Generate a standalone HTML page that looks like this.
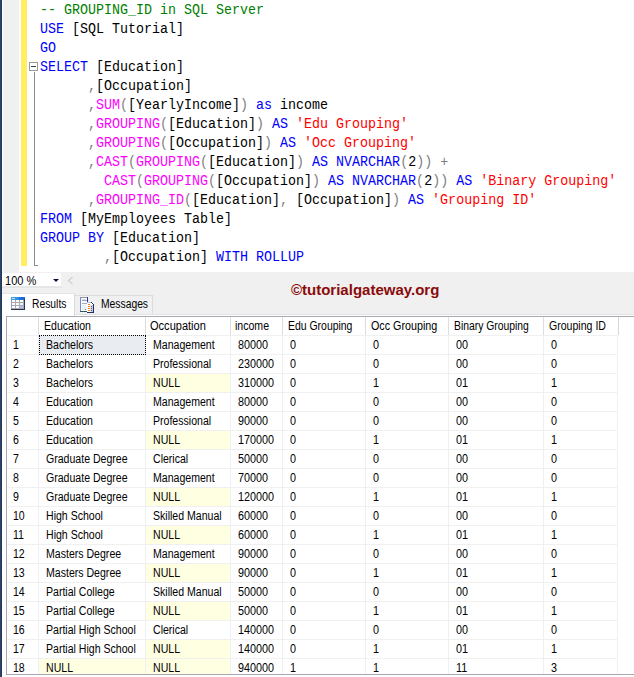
<!DOCTYPE html>
<html><head><meta charset="utf-8"><title>GROUPING_ID in SQL Server</title>
<style>
html,body{margin:0;padding:0;background:#fff;}
body{width:634px;height:677px;position:relative;overflow:hidden;font-family:"Liberation Sans",sans-serif;}
div{position:absolute;box-sizing:border-box;}
#strip{left:0;top:0;width:2px;height:677px;background:#23385c;border-left:1px solid #2f4264;}
#margin{left:3px;top:0;width:16px;height:272px;background:#f0f0f0;}
#yellow{left:21.25px;top:0;width:5.5px;height:266px;background:#ffee62;}
#editor{left:0;top:0;width:634px;height:272px;background:#fff;}
.cl{left:40px;height:19px;line-height:19px;white-space:pre;font-family:"Liberation Mono",monospace;font-size:14px;transform:scaleX(0.9524);transform-origin:0 0;}
.g{color:#008000}.b{color:#0000ff}.k{color:#000}.m{color:#ff00ff}.r{color:#ff0000}.y{color:#808080}
#obox{left:29px;top:62px;width:9px;height:9px;border:1px solid #9a9a9a;background:#fff;}
#obox i{position:absolute;left:1px;top:3px;width:5px;height:1px;background:#2b4a48;}
#oline{left:34px;top:72px;width:1px;height:194px;background:#8c8c8c;}
#otick{left:34px;top:265px;width:4px;height:1px;background:#8c8c8c;}
#lower{left:2px;top:272px;width:632px;height:43px;background:#f0f0f0;border-bottom:1px solid #e2e2e2;}
#page{left:2px;top:315px;width:632px;height:362px;background:#fff;}
#zoom{left:2px;top:272.5px;width:59.2px;height:13.7px;background:#fff;}
#zoomsh{left:2px;top:286.2px;width:59.8px;height:2.3px;background:#e6e6e6;}
#zoomt{left:5px;top:274px;height:15px;line-height:15px;font-size:12px;color:#000;white-space:pre;transform:scaleX(0.92);transform-origin:0 0;}
#zarrow{left:53px;top:279px;width:0;height:0;border-left:3px solid transparent;border-right:3px solid transparent;border-top:3px solid #10103c;}
#wm{left:291px;top:281px;height:18px;line-height:18px;font-size:15px;font-weight:bold;color:#8b0a0a;white-space:pre;}
#tabR{left:2px;top:293px;width:73px;height:23px;background:#fff;border-right:1px solid #dadada;border-top:1px solid #e4e4e4;}
#tabM{left:75px;top:295px;width:78px;height:19px;background:#f0f0f0;border-top:1px solid #dcdcdc;border-right:1px solid #dcdcdc;}
.tt{top:297px;height:14px;line-height:14px;font-size:12px;color:#000;white-space:pre;transform:scaleX(0.86);transform-origin:0 0;}
#grid{left:6px;top:316px;width:628px;height:359px;background:#fff;border-left:1px solid #a8a8b0;border-top:1px solid #a8a8b0;border-bottom:1px solid #a8a8b0;}
.hc,.rh,.gc{height:18px;line-height:18px;font-size:12px;color:#000;white-space:pre;overflow:hidden;}
.hc span,.rh span,.gc span{display:inline-block;transform:scaleX(0.88);transform-origin:0 50%;}
.hc{padding-left:5px;}
.rh{padding-left:6px;}
.gc{padding-left:7px;}
.nu{background:#ffffe1;}
.sel{background:#e9edf1;}
#selb{left:39px;top:335px;width:107px;height:20px;border:1px dotted #000;}
#gbot{left:7px;top:674px;width:627px;height:3px;background:#fff;border-top:1px solid #a8a8b0;}
.vl{width:1px;background:#efeff1;}
.hl{height:1px;background:#f0f0f0;}
</style></head><body>
<div id="editor"></div>
<div id="margin"></div>
<div id="yellow"></div>
<div id="obox"><i></i></div><div id="oline"></div><div id="otick"></div>
<div class="cl" style="top:1px"><span class="g">-- GROUPING_ID in SQL Server</span></div>
<div class="cl" style="top:20px"><span class="b">USE</span><span class="k"> [SQL Tutorial]</span></div>
<div class="cl" style="top:39px"><span class="b">GO</span></div>
<div class="cl" style="top:58px"><span class="b">SELECT</span><span class="k"> [Education]</span></div>
<div class="cl" style="top:77px"><span class="k">      </span><span class="y">,</span><span class="k">[Occupation]</span></div>
<div class="cl" style="top:96px"><span class="k">      </span><span class="y">,</span><span class="m">SUM</span><span class="y">(</span><span class="k">[YearlyIncome]</span><span class="y">)</span><span class="b"> as</span><span class="k"> income</span></div>
<div class="cl" style="top:115px"><span class="k">      </span><span class="y">,</span><span class="m">GROUPING</span><span class="y">(</span><span class="k">[Education]</span><span class="y">)</span><span class="b"> AS </span><span class="r">'Edu Grouping'</span></div>
<div class="cl" style="top:134px"><span class="k">      </span><span class="y">,</span><span class="m">GROUPING</span><span class="y">(</span><span class="k">[Occupation]</span><span class="y">)</span><span class="b"> AS </span><span class="r">'Occ Grouping'</span></div>
<div class="cl" style="top:153px"><span class="k">      </span><span class="y">,</span><span class="m">CAST</span><span class="y">(</span><span class="m">GROUPING</span><span class="y">(</span><span class="k">[Education]</span><span class="y">)</span><span class="b"> AS NVARCHAR</span><span class="y">(</span><span class="k">2</span><span class="y">))</span><span class="y"> +</span></div>
<div class="cl" style="top:172px"><span class="k">        </span><span class="m">CAST</span><span class="y">(</span><span class="m">GROUPING</span><span class="y">(</span><span class="k">[Occupation]</span><span class="y">)</span><span class="b"> AS NVARCHAR</span><span class="y">(</span><span class="k">2</span><span class="y">))</span><span class="b"> AS </span><span class="r">'Binary Grouping'</span></div>
<div class="cl" style="top:191px"><span class="k">      </span><span class="y">,</span><span class="m">GROUPING_ID</span><span class="y">(</span><span class="k">[Education]</span><span class="y">,</span><span class="k"> [Occupation]</span><span class="y">)</span><span class="b"> AS </span><span class="r">'Grouping ID'</span></div>
<div class="cl" style="top:210px"><span class="b">FROM</span><span class="k"> [MyEmployees Table]</span></div>
<div class="cl" style="top:229px"><span class="b">GROUP BY</span><span class="k"> [Education]</span></div>
<div class="cl" style="top:248px"><span class="k">        </span><span class="y">,</span><span class="k">[Occupation]</span><span class="b"> WITH ROLLUP</span></div>

<div id="lower"></div><div id="page"></div>
<div id="zoom"></div><div id="zoomsh"></div><div id="zoomt">100 %</div><div id="zarrow"></div>
<svg style="position:absolute;left:66px;top:275px" width="8" height="12" viewBox="0 0 8 12"><path d="M6.5 2.2 L2.3 5.6 L6.5 9" fill="none" stroke="#c8cbcf" stroke-width="1.1"/></svg>
<div id="wm">©tutorialgateway.org</div>
<div id="tabR"></div><div id="tabM"></div>
<svg style="position:absolute;left:11px;top:297px" width="14" height="13" viewBox="0 0 14 13" shape-rendering="crispEdges">
<defs><linearGradient id="hb" x1="0" y1="0" x2="1" y2="0"><stop offset="0" stop-color="#49a6e0"/><stop offset="0.55" stop-color="#2f8ce0"/><stop offset="0.6" stop-color="#1d73dc"/><stop offset="1" stop-color="#1668d4"/></linearGradient></defs>
<rect x="0" y="0" width="14" height="13" fill="#a9a9b4"/>
<rect x="0" y="0" width="14" height="3" fill="url(#hb)"/>
<rect x="1" y="1" width="3" height="1" fill="#b9dcf4"/>
<rect x="13" y="2" width="1" height="11" fill="#2a3550"/>
<rect x="0" y="12" width="14" height="1" fill="#26384a"/>
<rect x="0" y="3" width="1" height="9" fill="#9c9ccc"/>
<g fill="#fff"><rect x="1" y="3" width="3" height="2"/><rect x="5" y="3" width="3" height="2"/><rect x="9" y="3" width="3" height="2"/>
<rect x="1" y="6" width="3" height="2"/><rect x="5" y="6" width="3" height="2"/><rect x="1" y="9" width="3" height="2"/><rect x="5" y="9" width="3" height="2"/></g>
<rect x="9" y="6" width="3" height="2" fill="#e4f6fa"/><rect x="9" y="9" width="3" height="2" fill="#b4bcf4"/>
</svg>
<svg style="position:absolute;left:80px;top:297px" width="15" height="16" viewBox="0 0 15 16" shape-rendering="crispEdges">
<rect x="0" y="0" width="8" height="15" fill="#f6fbfd"/>
<rect x="0" y="0" width="8" height="1" fill="#9a9aa4"/>
<rect x="0" y="0" width="1" height="15" fill="#8484d4"/>
<rect x="7" y="0" width="1" height="6" fill="#34349c"/>
<rect x="0" y="14" width="8" height="1" fill="#2c5c50"/>
<rect x="2" y="3" width="5" height="1" fill="#9ca4b4"/>
<rect x="2" y="2" width="4" height="1" fill="#cfe6ee"/>
<rect x="2" y="6" width="5" height="1" fill="#a4acb8"/>
<rect x="2" y="8" width="4" height="5" fill="#e2f4f6"/>
<rect x="5" y="12" width="1" height="1" fill="#8c7424"/>
<path d="M7 5 H11 L14 8 V16 H7 Z" fill="#fff"/>
<path d="M11 5 L14 8 V16 H7 V15 H13 V8 L10.5 5.5 Z" fill="#1f2f6c"/>
<rect x="7" y="5" width="4" height="1" fill="#a8c8e8"/>
<rect x="11" y="6" width="1" height="2" fill="#fff"/><rect x="11" y="8" width="2" height="7" fill="#c6c6ee"/><rect x="10" y="8" width="1" height="7" fill="#e6e6f8"/>
<g fill="#f4801c"><rect x="8" y="7" width="2" height="1"/><rect x="8" y="9" width="2" height="1"/><rect x="8" y="11" width="2" height="1"/><rect x="8" y="13" width="2" height="1"/></g>
<g fill="#6c6c24"><rect x="11" y="9" width="1" height="1"/><rect x="11" y="11" width="1" height="1"/></g><rect x="11" y="13" width="1" height="1" fill="#2c6c4c"/>
</svg>
<div class="tt" style="left:32px">Results</div>
<div class="tt" style="left:101px">Messages</div>
<div id="grid"></div>
<div class="vl" style="left:38px;top:317px;height:18px;background:#dedee0"></div>
<div class="vl" style="left:38px;top:335px;height:339px"></div>
<div class="vl" style="left:145px;top:317px;height:18px;background:#dedee0"></div>
<div class="vl" style="left:145px;top:335px;height:339px"></div>
<div class="vl" style="left:230px;top:317px;height:18px;background:#dedee0"></div>
<div class="vl" style="left:230px;top:335px;height:339px"></div>
<div class="vl" style="left:282px;top:317px;height:18px;background:#dedee0"></div>
<div class="vl" style="left:282px;top:335px;height:339px"></div>
<div class="vl" style="left:365px;top:317px;height:18px;background:#dedee0"></div>
<div class="vl" style="left:365px;top:335px;height:339px"></div>
<div class="vl" style="left:448px;top:317px;height:18px;background:#dedee0"></div>
<div class="vl" style="left:448px;top:335px;height:339px"></div>
<div class="vl" style="left:543px;top:317px;height:18px;background:#dedee0"></div>
<div class="vl" style="left:543px;top:335px;height:339px"></div>
<div class="vl" style="left:618px;top:317px;height:18px;background:#d6d6d6"></div>
<div class="vl" style="left:617px;top:335px;height:339px"></div>
<div class="hl" style="left:7px;top:335px;width:611px"></div>
<div class="hl" style="left:7px;top:354px;width:611px"></div>
<div class="hl" style="left:7px;top:373px;width:611px"></div>
<div class="hl" style="left:7px;top:392px;width:611px"></div>
<div class="hl" style="left:7px;top:411px;width:611px"></div>
<div class="hl" style="left:7px;top:430px;width:611px"></div>
<div class="hl" style="left:7px;top:449px;width:611px"></div>
<div class="hl" style="left:7px;top:468px;width:611px"></div>
<div class="hl" style="left:7px;top:487px;width:611px"></div>
<div class="hl" style="left:7px;top:506px;width:611px"></div>
<div class="hl" style="left:7px;top:525px;width:611px"></div>
<div class="hl" style="left:7px;top:544px;width:611px"></div>
<div class="hl" style="left:7px;top:563px;width:611px"></div>
<div class="hl" style="left:7px;top:582px;width:611px"></div>
<div class="hl" style="left:7px;top:601px;width:611px"></div>
<div class="hl" style="left:7px;top:620px;width:611px"></div>
<div class="hl" style="left:7px;top:639px;width:611px"></div>
<div class="hl" style="left:7px;top:658px;width:611px"></div>

<div class="hc" style="left:7px;top:317px;width:31px;height:18px;padding-left:5px"><span style="transform:scaleX(0.88)"></span></div>
<div class="hc" style="left:39px;top:317px;width:106px;height:18px;padding-left:5px"><span style="transform:scaleX(0.88)">Education</span></div>
<div class="hc" style="left:146px;top:317px;width:84px;height:18px;padding-left:4px"><span style="transform:scaleX(0.92)">Occupation</span></div>
<div class="hc" style="left:231px;top:317px;width:51px;height:18px;padding-left:4px"><span style="transform:scaleX(0.88)">income</span></div>
<div class="hc" style="left:283px;top:317px;width:82px;height:18px;padding-left:5px"><span style="transform:scaleX(0.87)">Edu Grouping</span></div>
<div class="hc" style="left:366px;top:317px;width:82px;height:18px;padding-left:4.5px"><span style="transform:scaleX(0.895)">Occ Grouping</span></div>
<div class="hc" style="left:449px;top:317px;width:94px;height:18px;padding-left:5px"><span style="transform:scaleX(0.862)">Binary Grouping</span></div>
<div class="hc" style="left:544px;top:317px;width:74px;height:18px;padding-left:5px"><span style="transform:scaleX(0.88)">Grouping ID</span></div>
<div class="rh" style="left:7px;top:336px;width:31px"><span>1</span></div>
<div class="gc sel" style="left:39px;top:336px;width:106px"><span>Bachelors</span></div>
<div class="gc" style="left:146px;top:336px;width:84px"><span>Management</span></div>
<div class="gc" style="left:231px;top:336px;width:51px"><span style="transform:scaleX(0.9)">80000</span></div>
<div class="gc" style="left:283px;top:336px;width:82px"><span style="transform:scaleX(0.9)">0</span></div>
<div class="gc" style="left:366px;top:336px;width:82px"><span style="transform:scaleX(0.9)">0</span></div>
<div class="gc" style="left:449px;top:336px;width:94px"><span style="transform:scaleX(0.9)">00</span></div>
<div class="gc" style="left:544px;top:336px;width:74px"><span style="transform:scaleX(0.9)">0</span></div>
<div class="rh" style="left:7px;top:355px;width:31px"><span>2</span></div>
<div class="gc" style="left:39px;top:355px;width:106px"><span>Bachelors</span></div>
<div class="gc" style="left:146px;top:355px;width:84px"><span>Professional</span></div>
<div class="gc" style="left:231px;top:355px;width:51px"><span style="transform:scaleX(0.9)">230000</span></div>
<div class="gc" style="left:283px;top:355px;width:82px"><span style="transform:scaleX(0.9)">0</span></div>
<div class="gc" style="left:366px;top:355px;width:82px"><span style="transform:scaleX(0.9)">0</span></div>
<div class="gc" style="left:449px;top:355px;width:94px"><span style="transform:scaleX(0.9)">00</span></div>
<div class="gc" style="left:544px;top:355px;width:74px"><span style="transform:scaleX(0.9)">0</span></div>
<div class="rh" style="left:7px;top:374px;width:31px"><span>3</span></div>
<div class="gc" style="left:39px;top:374px;width:106px"><span>Bachelors</span></div>
<div class="gc nu" style="left:146px;top:374px;width:84px"><span>NULL</span></div>
<div class="gc" style="left:231px;top:374px;width:51px"><span style="transform:scaleX(0.9)">310000</span></div>
<div class="gc" style="left:283px;top:374px;width:82px"><span style="transform:scaleX(0.9)">0</span></div>
<div class="gc" style="left:366px;top:374px;width:82px"><span style="transform:scaleX(0.9)">1</span></div>
<div class="gc" style="left:449px;top:374px;width:94px"><span style="transform:scaleX(0.9)">01</span></div>
<div class="gc" style="left:544px;top:374px;width:74px"><span style="transform:scaleX(0.9)">1</span></div>
<div class="rh" style="left:7px;top:393px;width:31px"><span>4</span></div>
<div class="gc" style="left:39px;top:393px;width:106px"><span>Education</span></div>
<div class="gc" style="left:146px;top:393px;width:84px"><span>Management</span></div>
<div class="gc" style="left:231px;top:393px;width:51px"><span style="transform:scaleX(0.9)">80000</span></div>
<div class="gc" style="left:283px;top:393px;width:82px"><span style="transform:scaleX(0.9)">0</span></div>
<div class="gc" style="left:366px;top:393px;width:82px"><span style="transform:scaleX(0.9)">0</span></div>
<div class="gc" style="left:449px;top:393px;width:94px"><span style="transform:scaleX(0.9)">00</span></div>
<div class="gc" style="left:544px;top:393px;width:74px"><span style="transform:scaleX(0.9)">0</span></div>
<div class="rh" style="left:7px;top:412px;width:31px"><span>5</span></div>
<div class="gc" style="left:39px;top:412px;width:106px"><span>Education</span></div>
<div class="gc" style="left:146px;top:412px;width:84px"><span>Professional</span></div>
<div class="gc" style="left:231px;top:412px;width:51px"><span style="transform:scaleX(0.9)">90000</span></div>
<div class="gc" style="left:283px;top:412px;width:82px"><span style="transform:scaleX(0.9)">0</span></div>
<div class="gc" style="left:366px;top:412px;width:82px"><span style="transform:scaleX(0.9)">0</span></div>
<div class="gc" style="left:449px;top:412px;width:94px"><span style="transform:scaleX(0.9)">00</span></div>
<div class="gc" style="left:544px;top:412px;width:74px"><span style="transform:scaleX(0.9)">0</span></div>
<div class="rh" style="left:7px;top:431px;width:31px"><span>6</span></div>
<div class="gc" style="left:39px;top:431px;width:106px"><span>Education</span></div>
<div class="gc nu" style="left:146px;top:431px;width:84px"><span>NULL</span></div>
<div class="gc" style="left:231px;top:431px;width:51px"><span style="transform:scaleX(0.9)">170000</span></div>
<div class="gc" style="left:283px;top:431px;width:82px"><span style="transform:scaleX(0.9)">0</span></div>
<div class="gc" style="left:366px;top:431px;width:82px"><span style="transform:scaleX(0.9)">1</span></div>
<div class="gc" style="left:449px;top:431px;width:94px"><span style="transform:scaleX(0.9)">01</span></div>
<div class="gc" style="left:544px;top:431px;width:74px"><span style="transform:scaleX(0.9)">1</span></div>
<div class="rh" style="left:7px;top:450px;width:31px"><span>7</span></div>
<div class="gc" style="left:39px;top:450px;width:106px"><span>Graduate Degree</span></div>
<div class="gc" style="left:146px;top:450px;width:84px"><span>Clerical</span></div>
<div class="gc" style="left:231px;top:450px;width:51px"><span style="transform:scaleX(0.9)">50000</span></div>
<div class="gc" style="left:283px;top:450px;width:82px"><span style="transform:scaleX(0.9)">0</span></div>
<div class="gc" style="left:366px;top:450px;width:82px"><span style="transform:scaleX(0.9)">0</span></div>
<div class="gc" style="left:449px;top:450px;width:94px"><span style="transform:scaleX(0.9)">00</span></div>
<div class="gc" style="left:544px;top:450px;width:74px"><span style="transform:scaleX(0.9)">0</span></div>
<div class="rh" style="left:7px;top:469px;width:31px"><span>8</span></div>
<div class="gc" style="left:39px;top:469px;width:106px"><span>Graduate Degree</span></div>
<div class="gc" style="left:146px;top:469px;width:84px"><span>Management</span></div>
<div class="gc" style="left:231px;top:469px;width:51px"><span style="transform:scaleX(0.9)">70000</span></div>
<div class="gc" style="left:283px;top:469px;width:82px"><span style="transform:scaleX(0.9)">0</span></div>
<div class="gc" style="left:366px;top:469px;width:82px"><span style="transform:scaleX(0.9)">0</span></div>
<div class="gc" style="left:449px;top:469px;width:94px"><span style="transform:scaleX(0.9)">00</span></div>
<div class="gc" style="left:544px;top:469px;width:74px"><span style="transform:scaleX(0.9)">0</span></div>
<div class="rh" style="left:7px;top:488px;width:31px"><span>9</span></div>
<div class="gc" style="left:39px;top:488px;width:106px"><span>Graduate Degree</span></div>
<div class="gc nu" style="left:146px;top:488px;width:84px"><span>NULL</span></div>
<div class="gc" style="left:231px;top:488px;width:51px"><span style="transform:scaleX(0.9)">120000</span></div>
<div class="gc" style="left:283px;top:488px;width:82px"><span style="transform:scaleX(0.9)">0</span></div>
<div class="gc" style="left:366px;top:488px;width:82px"><span style="transform:scaleX(0.9)">1</span></div>
<div class="gc" style="left:449px;top:488px;width:94px"><span style="transform:scaleX(0.9)">01</span></div>
<div class="gc" style="left:544px;top:488px;width:74px"><span style="transform:scaleX(0.9)">1</span></div>
<div class="rh" style="left:7px;top:507px;width:31px"><span>10</span></div>
<div class="gc" style="left:39px;top:507px;width:106px"><span>High School</span></div>
<div class="gc" style="left:146px;top:507px;width:84px"><span>Skilled Manual</span></div>
<div class="gc" style="left:231px;top:507px;width:51px"><span style="transform:scaleX(0.9)">60000</span></div>
<div class="gc" style="left:283px;top:507px;width:82px"><span style="transform:scaleX(0.9)">0</span></div>
<div class="gc" style="left:366px;top:507px;width:82px"><span style="transform:scaleX(0.9)">0</span></div>
<div class="gc" style="left:449px;top:507px;width:94px"><span style="transform:scaleX(0.9)">00</span></div>
<div class="gc" style="left:544px;top:507px;width:74px"><span style="transform:scaleX(0.9)">0</span></div>
<div class="rh" style="left:7px;top:526px;width:31px"><span>11</span></div>
<div class="gc" style="left:39px;top:526px;width:106px"><span>High School</span></div>
<div class="gc nu" style="left:146px;top:526px;width:84px"><span>NULL</span></div>
<div class="gc" style="left:231px;top:526px;width:51px"><span style="transform:scaleX(0.9)">60000</span></div>
<div class="gc" style="left:283px;top:526px;width:82px"><span style="transform:scaleX(0.9)">0</span></div>
<div class="gc" style="left:366px;top:526px;width:82px"><span style="transform:scaleX(0.9)">1</span></div>
<div class="gc" style="left:449px;top:526px;width:94px"><span style="transform:scaleX(0.9)">01</span></div>
<div class="gc" style="left:544px;top:526px;width:74px"><span style="transform:scaleX(0.9)">1</span></div>
<div class="rh" style="left:7px;top:545px;width:31px"><span>12</span></div>
<div class="gc" style="left:39px;top:545px;width:106px"><span>Masters Degree</span></div>
<div class="gc" style="left:146px;top:545px;width:84px"><span>Management</span></div>
<div class="gc" style="left:231px;top:545px;width:51px"><span style="transform:scaleX(0.9)">90000</span></div>
<div class="gc" style="left:283px;top:545px;width:82px"><span style="transform:scaleX(0.9)">0</span></div>
<div class="gc" style="left:366px;top:545px;width:82px"><span style="transform:scaleX(0.9)">0</span></div>
<div class="gc" style="left:449px;top:545px;width:94px"><span style="transform:scaleX(0.9)">00</span></div>
<div class="gc" style="left:544px;top:545px;width:74px"><span style="transform:scaleX(0.9)">0</span></div>
<div class="rh" style="left:7px;top:564px;width:31px"><span>13</span></div>
<div class="gc" style="left:39px;top:564px;width:106px"><span>Masters Degree</span></div>
<div class="gc nu" style="left:146px;top:564px;width:84px"><span>NULL</span></div>
<div class="gc" style="left:231px;top:564px;width:51px"><span style="transform:scaleX(0.9)">90000</span></div>
<div class="gc" style="left:283px;top:564px;width:82px"><span style="transform:scaleX(0.9)">0</span></div>
<div class="gc" style="left:366px;top:564px;width:82px"><span style="transform:scaleX(0.9)">1</span></div>
<div class="gc" style="left:449px;top:564px;width:94px"><span style="transform:scaleX(0.9)">01</span></div>
<div class="gc" style="left:544px;top:564px;width:74px"><span style="transform:scaleX(0.9)">1</span></div>
<div class="rh" style="left:7px;top:583px;width:31px"><span>14</span></div>
<div class="gc" style="left:39px;top:583px;width:106px"><span>Partial College</span></div>
<div class="gc" style="left:146px;top:583px;width:84px"><span>Skilled Manual</span></div>
<div class="gc" style="left:231px;top:583px;width:51px"><span style="transform:scaleX(0.9)">50000</span></div>
<div class="gc" style="left:283px;top:583px;width:82px"><span style="transform:scaleX(0.9)">0</span></div>
<div class="gc" style="left:366px;top:583px;width:82px"><span style="transform:scaleX(0.9)">0</span></div>
<div class="gc" style="left:449px;top:583px;width:94px"><span style="transform:scaleX(0.9)">00</span></div>
<div class="gc" style="left:544px;top:583px;width:74px"><span style="transform:scaleX(0.9)">0</span></div>
<div class="rh" style="left:7px;top:602px;width:31px"><span>15</span></div>
<div class="gc" style="left:39px;top:602px;width:106px"><span>Partial College</span></div>
<div class="gc nu" style="left:146px;top:602px;width:84px"><span>NULL</span></div>
<div class="gc" style="left:231px;top:602px;width:51px"><span style="transform:scaleX(0.9)">50000</span></div>
<div class="gc" style="left:283px;top:602px;width:82px"><span style="transform:scaleX(0.9)">0</span></div>
<div class="gc" style="left:366px;top:602px;width:82px"><span style="transform:scaleX(0.9)">1</span></div>
<div class="gc" style="left:449px;top:602px;width:94px"><span style="transform:scaleX(0.9)">01</span></div>
<div class="gc" style="left:544px;top:602px;width:74px"><span style="transform:scaleX(0.9)">1</span></div>
<div class="rh" style="left:7px;top:621px;width:31px"><span>16</span></div>
<div class="gc" style="left:39px;top:621px;width:106px"><span>Partial High School</span></div>
<div class="gc" style="left:146px;top:621px;width:84px"><span>Clerical</span></div>
<div class="gc" style="left:231px;top:621px;width:51px"><span style="transform:scaleX(0.9)">140000</span></div>
<div class="gc" style="left:283px;top:621px;width:82px"><span style="transform:scaleX(0.9)">0</span></div>
<div class="gc" style="left:366px;top:621px;width:82px"><span style="transform:scaleX(0.9)">0</span></div>
<div class="gc" style="left:449px;top:621px;width:94px"><span style="transform:scaleX(0.9)">00</span></div>
<div class="gc" style="left:544px;top:621px;width:74px"><span style="transform:scaleX(0.9)">0</span></div>
<div class="rh" style="left:7px;top:640px;width:31px"><span>17</span></div>
<div class="gc" style="left:39px;top:640px;width:106px"><span>Partial High School</span></div>
<div class="gc nu" style="left:146px;top:640px;width:84px"><span>NULL</span></div>
<div class="gc" style="left:231px;top:640px;width:51px"><span style="transform:scaleX(0.9)">140000</span></div>
<div class="gc" style="left:283px;top:640px;width:82px"><span style="transform:scaleX(0.9)">0</span></div>
<div class="gc" style="left:366px;top:640px;width:82px"><span style="transform:scaleX(0.9)">1</span></div>
<div class="gc" style="left:449px;top:640px;width:94px"><span style="transform:scaleX(0.9)">01</span></div>
<div class="gc" style="left:544px;top:640px;width:74px"><span style="transform:scaleX(0.9)">1</span></div>
<div class="rh" style="left:7px;top:659px;width:31px"><span>18</span></div>
<div class="gc nu" style="left:39px;top:659px;width:106px"><span>NULL</span></div>
<div class="gc nu" style="left:146px;top:659px;width:84px"><span>NULL</span></div>
<div class="gc" style="left:231px;top:659px;width:51px"><span style="transform:scaleX(0.9)">940000</span></div>
<div class="gc" style="left:283px;top:659px;width:82px"><span style="transform:scaleX(0.9)">1</span></div>
<div class="gc" style="left:366px;top:659px;width:82px"><span style="transform:scaleX(0.9)">1</span></div>
<div class="gc" style="left:449px;top:659px;width:94px"><span style="transform:scaleX(0.9)">11</span></div>
<div class="gc" style="left:544px;top:659px;width:74px"><span style="transform:scaleX(0.9)">3</span></div>

<div id="gbot"></div>
<div id="selb"></div>

<div id="strip"></div>
</body></html>
